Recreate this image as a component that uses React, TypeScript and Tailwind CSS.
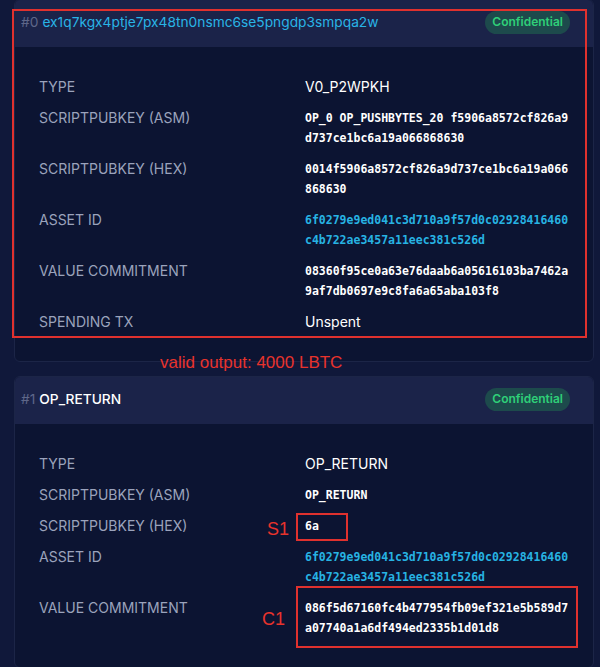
import React from "react";

type Row = { label: string; value: string; kind?: "sans" | "mono" | "link" };

const output0: Row[] = [
  { label: "Type", value: "V0_P2WPKH", kind: "sans" },
  { label: "scriptPubKey (asm)", value: "OP_0 OP_PUSHBYTES_20 f5906a8572cf826a9d737ce1bc6a19a066868630" },
  { label: "scriptPubKey (hex)", value: "0014f5906a8572cf826a9d737ce1bc6a19a066868630" },
  { label: "Asset ID", value: "6f0279e9ed041c3d710a9f57d0c02928416460c4b722ae3457a11eec381c526d", kind: "link" },
  { label: "Value commitment", value: "08360f95ce0a63e76daab6a05616103ba7462a9af7db0697e9c8fa6a65aba103f8" },
  { label: "Spending tx", value: "Unspent", kind: "sans" },
];

const output1: Row[] = [
  { label: "Type", value: "OP_RETURN", kind: "sans" },
  { label: "scriptPubKey (asm)", value: "OP_RETURN" },
  { label: "scriptPubKey (hex)", value: "6a" },
  { label: "Asset ID", value: "6f0279e9ed041c3d710a9f57d0c02928416460c4b722ae3457a11eec381c526d", kind: "link" },
  { label: "Value commitment", value: "086f5d67160fc4b477954fb09ef321e5b589d7a07740a1a6df494ed2335b1d01d8" },
];

function Badge() {
  return (
    <span className="flex h-[23px] items-center rounded-full bg-[#1d4a4c] px-[7px] text-[12px] font-semibold text-[#2fcf78]">
      Confidential
    </span>
  );
}

function Value({ row }: { row: Row }) {
  if (row.kind === "sans") {
    return <div className="text-[14px] leading-[20px] text-white">{row.value}</div>;
  }
  return (
    <div
      className={`w-[266px] break-all font-['DejaVu_Sans_Mono',monospace] text-[11.5px] font-semibold leading-[20px] ${
        row.kind === "link" ? "text-[#27b3e3]" : "text-white"
      }`}
    >
      {row.value}
    </div>
  );
}

function OutputCard({ index, title, titleColor, rows }: { index: number; title: string; titleColor: string; rows: Row[] }) {
  return (
    <div className="overflow-hidden rounded-[6px] border border-[#1c2547] bg-[#0c1432]">
      <div className="flex h-[47px] items-center justify-between bg-[#1b2349] pb-[3px] pl-[6px] pr-[23px]">
        <div className="flex items-baseline gap-[4px] text-[13.75px]">
          <span className="text-[#5f6789]">#{index}</span>
          <span className={titleColor}>{title}</span>
        </div>
        <Badge />
      </div>
      <div className="flex flex-col gap-[11px] pb-[29px] pl-[24px] pt-[30px]">
        {rows.map((row) => (
          <div key={row.label} className="flex">
            <div className="w-[266px] shrink-0 text-[14px] uppercase leading-[20px] text-[#9ba3bc]">{row.label}</div>
            <Value row={row} />
          </div>
        ))}
      </div>
    </div>
  );
}

export default function App() {
  return (
    <div className="relative h-[667px] overflow-hidden bg-[#10183a] font-['Inter','Noto_Sans',sans-serif]">
      <div className="mt-[-1px] flex flex-col gap-[14px] pl-[14px] pr-[6px]">
        <OutputCard index={0} title="ex1q7kgx4ptje7px48tn0nsmc6se5pngdp3smpqa2w" titleColor="text-[#29b4e6]" rows={output0} />
        <OutputCard index={1} title="OP_RETURN" titleColor="text-white font-medium" rows={output1} />
      </div>

      {/* annotations */}
      <div className="absolute left-[12px] top-[9px] h-[329px] w-[575px] border-2 border-[#e0312e]" />
      <div className="absolute left-[160px] top-[350px] font-['Liberation_Sans',sans-serif] text-[17px] text-[#e8332c]">
        valid output: 4000 LBTC
      </div>
      <div className="absolute left-[267px] top-[516px] font-['Liberation_Sans',sans-serif] text-[18px] text-[#e8332c]">S1</div>
      <div className="absolute left-[296px] top-[513px] h-[28px] w-[52px] border-2 border-[#e0312e]" />
      <div className="absolute left-[262px] top-[606px] font-['Liberation_Sans',sans-serif] text-[18px] text-[#e8332c]">C1</div>
      <div className="absolute left-[296px] top-[586px] h-[62px] w-[282px] border-2 border-[#e0312e]" />
    </div>
  );
}
